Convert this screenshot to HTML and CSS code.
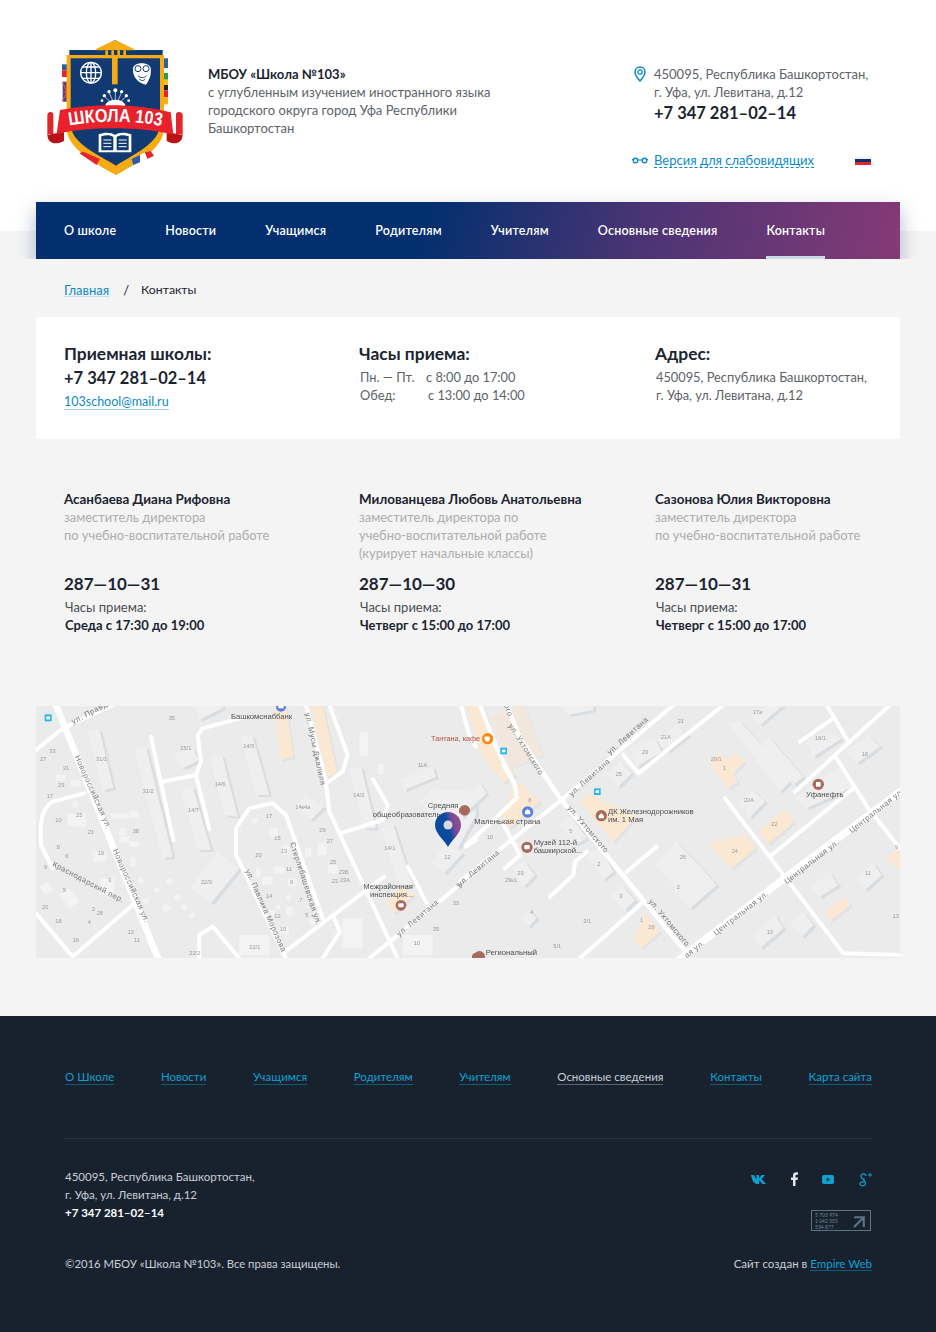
FILE: index.html
```html
<!DOCTYPE html>
<html lang="ru">
<head>
    <meta charset="UTF-8">
    <meta name="viewport" content="width=device-width, initial-scale=1.0">
    <title>Контакты — Школа 103</title>
    <link rel="stylesheet" href="styles.css">
</head>
<body>
    <!-- шапка -->
    <header class="header">
        <svg class="logo" viewBox="0 0 450 435" width="150" height="145">
            <!-- флаги по краям -->
            <rect x="66" y="68" width="26" height="20" fill="#fff" stroke="#e6e6e6"/>
            <rect x="66" y="88" width="26" height="18" fill="#2f5ca8"/>
            <rect x="66" y="106" width="26" height="20" fill="#e2262c"/>
            <rect x="68" y="140" width="24" height="60" fill="#3a4a86"/>
            <path d="M68 142l24 56M92 142l-24 56M80 140v60M68 170h24" stroke="#e2474c" stroke-width="4"/>
            <rect x="360" y="70" width="24" height="30" fill="#2f5ca8"/>
            <rect x="360" y="100" width="24" height="14" fill="#fff" stroke="#e6e6e6"/>
            <rect x="360" y="114" width="24" height="20" fill="#2f9a4a"/>
            <rect x="360" y="134" width="24" height="16" fill="#f6c21c"/>
            <rect x="360" y="150" width="24" height="16" fill="#1c2230"/>
            <rect x="360" y="166" width="24" height="20" fill="#e2262c"/>
            <rect x="360" y="186" width="24" height="22" fill="#f6b21c"/>
            <!-- щит -->
            <path d="M88 45H172L225 15L280 45H368V275C368 340 290 385 228 418C165 385 88 340 88 275Z" fill="#123a72"/>
            <path d="M225 15L282 42V46H168V42Z" fill="#f5ab13"/>
            <path d="M190 46h70v14h-70z" fill="#123a72"/>
            <path d="M196 46h8v14h-8zM214 46h8v14h-8zM232 46h8v14h-8zM250 46h8v14h-8z" fill="#f5ab13"/>
            <path d="M80 60H372V280C372 340 290 385 228 420C165 385 80 340 80 280ZM92 70V268C92 325 176 360 228 392C278 360 360 325 360 268V70Z" fill="#f5ab13" fill-rule="evenodd"/>
            <rect x="216" y="60" width="17" height="88" fill="#f5ab13"/>
            <!-- глобус -->
            <g fill="none" stroke="#fff" stroke-width="4">
                <circle cx="153" cy="113" r="31"/>
                <ellipse cx="153" cy="113" rx="14" ry="31"/>
                <path d="M153 82v62M122 113h62M127 96h52M127 130h52"/>
            </g>
            <!-- сова -->
            <path d="M279 100C282 80 328 80 332 100C335 122 326 138 318 149C298 146 276 128 279 100Z" fill="#fff"/>
            <g fill="none" stroke="#123a72" stroke-width="3">
                <circle cx="294" cy="101" r="9"/>
                <circle cx="318" cy="101" r="9"/>
                <path d="M294 122C302 130 312 130 320 122M298 132C304 138 310 138 316 132"/>
            </g>
            <!-- точки над лентой -->
            <g fill="#fff">
                <circle cx="226" cy="166" r="6"/><circle cx="207" cy="170" r="5"/><circle cx="245" cy="170" r="5"/>
                <circle cx="193" cy="182" r="5"/><circle cx="259" cy="182" r="5"/><circle cx="186" cy="197" r="4"/>
                <circle cx="266" cy="197" r="4"/>
            </g>
            <path d="M226 214L207 172M226 214L226 168M226 214L245 172M226 214L193 184M226 214L259 184" stroke="#fff" stroke-width="2"/>
            <path d="M196 214a30 20 0 0 1 60 0z" fill="#fff"/>
            <!-- лента -->
            <path d="M22 240C22 230 36 228 40 236V300C36 296 28 296 22 300Z" fill="#e2262c"/>
            <path d="M22 300C24 328 48 330 72 318L72 290L40 296Z" fill="#b81319"/>
            <path d="M428 240C428 230 412 228 408 236V300C412 296 422 296 428 300Z" fill="#e2262c"/>
            <path d="M428 300C426 328 402 330 380 318L380 290L408 296Z" fill="#b81319"/>
            <path d="M60 225C160 205 290 205 392 232L400 298C290 274 160 274 50 296Z" fill="#e9212b"/>
            <path id="logo-arc" d="M88 272C170 256 280 256 367 274" fill="none"/>
            <text class="logo-text"><textPath href="#logo-arc" textLength="278" lengthAdjust="spacingAndGlyphs">ШКОЛА 103</textPath></text>
            <!-- книга -->
            <path d="M176 298C195 290 215 292 225 300C235 292 255 290 274 298V352H176Z" fill="#fff"/>
            <path d="M184 304C198 299 212 300 220 306V346H184ZM266 304C252 299 238 300 230 306V346H266Z" fill="#123a72"/>
            <path d="M190 315h24M190 325h24M190 335h24M236 315h24M236 325h24M236 335h24" stroke="#fff" stroke-width="3"/>
            <!-- флаги снизу -->
            <path d="M118 355L130 350L180 372L170 390Z" fill="#e2262c"/>
            <path d="M275 372L300 360L300 382L280 390Z" fill="#2f5ca8"/>
            <path d="M300 360L315 352L322 372L300 382Z" fill="#fff"/>
            <path d="M315 352L332 348L342 362L322 372Z" fill="#e2262c"/>
        </svg>
        <div class="school-name">
            <b>МБОУ «Школа №103»</b><br>
            с углубленным изучением иностранного языка<br>
            городского округа город Уфа Республики<br>
            Башкортостан
        </div>
        <div class="header-right">
            <div class="address">
                <svg class="pin" viewBox="0 0 12 16" width="12" height="16">
                    <path d="M6 1C3 1 1 3.200 1 6c0 3.500 5 9 5 9s5-5.500 5-9C11 3.200 9 1 6 1z" fill="none" stroke="#0b8ac6" stroke-width="1.500"/>
                    <circle cx="6" cy="6" r="2.200" fill="none" stroke="#0b8ac6" stroke-width="1.300"/>
                </svg>
                <div>
                    450095, Республика Башкортостан,<br>
                    г. Уфа, ул. Левитана, д.12
                    <div class="big-phone">+7 347 281–02–14</div>
                </div>
            </div>
            <div class="tools">
                <svg viewBox="0 0 16 7" width="16" height="7">
                    <circle cx="3.500" cy="3.500" r="2.300" fill="none" stroke="#0b8ac6" stroke-width="1.400"/>
                    <circle cx="12.500" cy="3.500" r="2.300" fill="none" stroke="#0b8ac6" stroke-width="1.400"/>
                    <path d="M5.500 3h5M0 2.500h1.500M14.500 2.500h1.500" stroke="#0b8ac6" stroke-width="1.200"/>
                </svg>
                <a class="blind-link" href="#">Версия для слабовидящих</a>
                <span class="flag"><i></i><i></i><i></i></span>
            </div>
        </div>
    </header>

    <!-- меню -->
    <div class="nav-wrap">
        <nav class="nav">
            <a href="#">О школе</a>
            <a href="#">Новости</a>
            <a href="#">Учащимся</a>
            <a href="#">Родителям</a>
            <a href="#">Учителям</a>
            <a href="#">Основные сведения</a>
            <a href="#" class="active">Контакты</a>
            <svg class="search" viewBox="0 0 16 16" width="16" height="16">
                <circle cx="6.500" cy="6.500" r="4.700" fill="none" stroke="#fff" stroke-width="1.800"/>
                <path d="M10 10l5 5" stroke="#fff" stroke-width="2"/>
            </svg>
        </nav>
    </div>

    <main class="main">
        <div class="breadcrumbs">
            <a href="#">Главная</a>
            <span class="sep">/</span>
            <span class="current">Контакты</span>
        </div>

        <section class="card">
            <div>
                <h3>Приемная школы:</h3>
                <div class="card-phone">+7 347 281–02–14</div>
                <a class="mail" href="#">103school@mail.ru</a>
            </div>
            <div>
                <h3>Часы приема:</h3>
                <div class="hours"><span>Пн. — Пт.</span>с 8:00 до 17:00</div>
                <div class="hours"><span class="wide">Обед:</span>с 13:00 до 14:00</div>
            </div>
            <div>
                <h3>Адрес:</h3>
                <div class="hours">450095, Республика Башкортостан,</div>
                <div class="hours">г. Уфа, ул. Левитана, д.12</div>
            </div>
        </section>

        <section class="people">
            <div class="person">
                <div class="person-name">Асанбаева Диана Рифовна</div>
                <div class="person-post">заместитель директора<br>по учебно-воспитательной работе</div>
                <div class="person-phone">287—10—31</div>
                <div class="person-hours">Часы приема:</div>
                <div class="person-time">Среда с 17:30 до 19:00</div>
            </div>
            <div class="person">
                <div class="person-name">Милованцева Любовь Анатольевна</div>
                <div class="person-post">заместитель директора по<br>учебно-воспитательной работе<br>(курирует начальные классы)</div>
                <div class="person-phone">287—10—30</div>
                <div class="person-hours">Часы приема:</div>
                <div class="person-time">Четверг с 15:00 до 17:00</div>
            </div>
            <div class="person">
                <div class="person-name">Сазонова Юлия Викторовна</div>
                <div class="person-post">заместитель директора<br>по учебно-воспитательной работе</div>
                <div class="person-phone">287—10—31</div>
                <div class="person-hours">Часы приема:</div>
                <div class="person-time">Четверг с 15:00 до 17:00</div>
            </div>
        </section>

        <!-- карта -->
        <svg class="map" viewBox="0 0 864 252" width="864" height="252">
            <rect width="864" height="252" fill="#ebebeb"/>
            <!-- левая половина, координаты в масштабе 3:1 -->
            <g transform="scale(.3333) translate(0,-3)">
                <g class="map-build">
                    <path d="M155 80L190 72L232 250L200 255Z"/>
                    <path d="M295 130L330 125L410 455L380 460Z"/>
                    <path d="M435 255L470 245L525 435L485 435Z"/>
                    <path d="M520 155L558 150L605 335L565 330Z"/>
                    <path d="M612 95L648 90L700 270L660 270Z"/>
                    <path d="M940 190L975 185L1020 370L985 370Z"/>
                    <path d="M1035 370L1070 355L1130 540L1090 545Z"/>
                    <path d="M1090 225L1190 185L1200 215L1105 255Z"/>
                    <path d="M460 550L545 440L610 490L525 595Z"/>
                    <path d="M410 150L470 130L490 165L440 190Z"/>
                    <path d="M770 310L810 270L865 305L825 345Z"/>
                    <path d="M470 0H560V10L490 45Z"/>
                    <path d="M1150 290L1190 250L1320 260V330L1265 430Z"/>
                    <path d="M1185 470L1235 415L1280 445L1225 505Z"/>
                </g>
                <g class="map-orange">
                    <path d="M712 0H750L772 155L735 165Z"/>
                    <path d="M825 0H860L905 205L872 218Z"/>
                    <path d="M1050 590L1095 545L1135 570L1075 625Z"/>
                    <path d="M1290 0H1320V90Z"/>
                </g>
                <g fill="#f3f3f3">
                    <rect x="225" y="325" width="50" height="16"/><rect x="280" y="318" width="28" height="20"/>
                    <rect x="250" y="370" width="18" height="20"/><rect x="250" y="395" width="30" height="18"/>
                    <rect x="280" y="410" width="30" height="16"/><rect x="283" y="458" width="16" height="26"/>
                    <path d="M315 515l12 12-12 12-12-12z"/><path d="M400 517l12 12-12 12-12-12z"/>
                    <path d="M362 545l10 10-10 10-10-10z"/><path d="M424 565l12 10-12 12-12-10z"/>
                    <path d="M390 597l14 10-14 14-14-10z"/><path d="M445 595l12 10-12 12-12-10z"/>
                    <path d="M468 620l12 10-12 12-12-10z"/><path d="M330 577l12 10-12 12-12-10z"/>
                    <rect x="95" y="325" width="55" height="40"/><rect x="60" y="210" width="28" height="18"/>
                    <rect x="105" y="225" width="28" height="20"/><rect x="110" y="290" width="18" height="18"/>
                    <path d="M10 545l22-15 20 25-22 15z"/><path d="M70 570l30-20 30 40-30 20z"/>
                    <rect x="190" y="520" width="45" height="50"/><rect x="170" y="440" width="40" height="30"/>
                    <rect x="715" y="485" width="30" height="22"/><rect x="680" y="515" width="30" height="24"/>
                    <rect x="755" y="520" width="26" height="24"/><rect x="808" y="430" width="18" height="26"/>
                    <rect x="845" y="415" width="26" height="36"/><rect x="875" y="480" width="30" height="26"/>
                    <rect x="650" y="340" width="14" height="14"/><rect x="700" y="370" width="26" height="26"/>
                    <rect x="740" y="420" width="20" height="30"/><rect x="660" y="490" width="14" height="26"/>
                    <rect x="750" y="570" width="16" height="16"/><rect x="720" y="600" width="12" height="12"/>
                    <rect x="700" y="615" width="16" height="16"/><rect x="750" y="605" width="20" height="26"/>
                    <rect x="730" y="665" width="30" height="24"/><rect x="820" y="640" width="20" height="20"/>
                    <rect x="970" y="80" width="26" height="74"/><rect x="1025" y="178" width="18" height="30"/>
                    <rect x="610" y="690" width="90" height="60"/><rect x="920" y="640" width="60" height="90"/>
                    <rect x="1100" y="690" width="90" height="60"/>
                </g>
                <g fill="none" stroke="#fff" stroke-linecap="round" stroke-linejoin="round" stroke-width="12">
                    <path d="M60 0L370 770" stroke-width="20"/>
                    <path d="M0 135L80 70L230 0"/>
                    <path d="M145 265L50 290C20 310 10 340 15 420L50 490"/>
                    <path d="M0 625L110 755L290 600"/>
                    <path d="M345 95L412 405"/>
                    <path d="M380 230L480 210L520 372"/>
                    <path d="M480 210L495 170L485 90L500 70L620 38"/>
                    <path d="M810 0L870 230L880 320L1085 760"/>
                    <path d="M880 0L935 150L920 200L870 235"/>
                    <path d="M912 385L1040 345L1055 300L1010 222"/>
                    <path d="M750 760L600 450V370L640 310L710 295L750 330L860 640"/>
                    <path d="M740 745L1045 515"/>
                    <path d="M890 630L912 680L860 760"/>
                    <path d="M490 760V690L530 665L610 760"/>
                    <path d="M1000 760L1320 500"/>
                    <path d="M1115 485L1180 610"/>
                    <path d="M1290 425L1320 405"/>
                    <path d="M1275 0L1300 90L1320 125"/>
                </g>
                <g class="map-num">
                    <text x="398" y="44">35</text><text x="433" y="136">25/1</text><text x="180" y="168">31/1</text>
                    <text x="320" y="265">31/2</text><text x="622" y="128">14/5</text><text x="536" y="242">14/6</text>
                    <text x="456" y="322">14/7</text><text x="952" y="275">14/2</text><text x="778" y="313">14к4а</text>
                    <text x="1045" y="434">14/1</text><text x="1145" y="185">11А</text><text x="690" y="340">17</text>
                    <text x="850" y="380">29</text><text x="872" y="414">27</text><text x="715" y="404">15</text>
                    <text x="735" y="445">13</text><text x="658" y="456">20</text><text x="882" y="478">25</text>
                    <text x="750" y="499">11</text><text x="762" y="537">9</text><text x="908" y="508">23Б</text>
                    <text x="887" y="534">23</text><text x="912" y="532">23А</text><text x="690" y="580">14</text>
                    <text x="790" y="592">7</text><text x="715" y="639">12</text><text x="808" y="635">5</text>
                    <text x="732" y="677">10</text><text x="495" y="536">22/3</text><text x="640" y="731">22/1</text>
                    <text x="460" y="751">22/2</text><text x="290" y="384">38</text><text x="155" y="387">21</text>
                    <text x="185" y="449">19</text><text x="120" y="335">25</text><text x="58" y="350">10</text>
                    <text x="62" y="432">8</text><text x="88" y="460">6</text><text x="24" y="492">9</text>
                    <text x="216" y="530">3</text><text x="80" y="560">5</text><text x="18" y="613">20</text>
                    <text x="58" y="653">18</text><text x="155" y="658">4</text><text x="168" y="618">2</text>
                    <text x="182" y="631">26</text><text x="110" y="710">16</text><text x="275" y="686">13</text>
                    <text x="294" y="710">11</text><text x="40" y="144">33</text><text x="12" y="168">27</text>
                    <text x="80" y="195">31</text><text x="66" y="245">29</text><text x="32" y="279">17</text>
                    <text x="1225" y="463">12</text><text x="1250" y="600">33</text><text x="1190" y="679">35</text>
                    <text x="1133" y="720">10</text>
                </g>
                <g class="map-street">
                    <text transform="translate(112,58) rotate(-28)">ул. Правды</text>
                    <text transform="translate(116,155) rotate(66)">Новороссийская ул.</text>
                    <text transform="translate(230,436) rotate(66)">Новороссийская ул.</text>
                    <text transform="translate(48,482) rotate(28)">Краснодарский пер.</text>
                    <text transform="translate(808,25) rotate(78)">ул. Мусы Джалиля</text>
                    <text transform="translate(628,497) rotate(66)">ул. Павлика Морозова</text>
                    <text transform="translate(762,415) rotate(72)">Стерлибашевская ул.</text>
                    <text transform="translate(1090,695) rotate(-40)">ул. Левитана</text>
                    <text transform="translate(1268,548) rotate(-40)">ул. Ле</text>
                </g>
                <g class="map-label">
                    <text x="585" y="42">Башкомснаббанк</text>
                    <text x="1175" y="309">Средняя</text>
                    <text x="1010" y="335">общеобразователь</text>
                    <text x="982" y="551">Межрайонная</text>
                    <text x="1002" y="577">инспекция...</text>
                </g>
                <rect x="26" y="28" width="21" height="21" fill="#29b6e8"/>
                <rect x="31" y="34" width="11" height="9" fill="#fff"/>
                <circle cx="735" cy="5" r="15" fill="#5a80e0"/>
                <rect x="727" y="0" width="16" height="10" fill="#fff"/>
                <circle cx="1285" cy="317" r="16" fill="#a96a5e"/>
                <path d="M1275 314l10-5 10 5-10 5zM1279 320h12v4h-12z" fill="#fff"/>
                <circle cx="1095" cy="601" r="16" fill="#a96a5e"/>
                <rect x="1087" y="595" width="16" height="12" rx="3" fill="#fff"/>
                <circle cx="1320" cy="756" r="12" fill="#a96a5e"/>
            </g>
            <!-- правая половина -->
            <g transform="translate(424,-1) scale(.3333)">
                <g class="map-build">
                    <path d="M440 205L480 170L515 205L475 245Z"/>
                    <path d="M510 130L585 100L605 140L530 185Z"/>
                    <path d="M590 105L650 60L685 90L620 140Z"/>
                    <path d="M800 50L840 50L1000 220L960 260L900 180Z"/>
                    <path d="M900 110L930 100L1030 215L1000 240Z"/>
                    <path d="M835 295L880 255L915 290L870 335Z"/>
                    <path d="M1040 110L1090 80L1145 100L1060 155Z"/>
                    <path d="M1160 140L1225 90L1260 125L1190 175Z"/>
                    <path d="M1005 280L1140 185L1180 245L1040 310Z"/>
                    <path d="M585 480L650 410L725 490L770 540L690 610L650 570L640 540Z"/>
                    <path d="M0 290L60 235L80 265L0 340Z"/>
                    <path d="M295 355L335 335L380 400L345 420Z"/>
                    <path d="M385 450L420 430L460 500L430 525Z"/>
                    <path d="M160 490L195 470L225 510L190 545Z"/>
                    <path d="M450 570L485 540L525 585L495 615Z"/>
                    <path d="M180 640L210 615L230 640L205 665Z"/>
                    <path d="M880 690L945 630L970 670L900 730Z"/>
                    <path d="M1190 520L1240 475L1265 510L1215 555Z"/>
                    <path d="M1050 545L1110 505L1135 540L1080 575Z"/>
                    <path d="M990 655L1030 620L1060 660L1025 695Z"/>
                    <path d="M300 0H400V15L325 30Z"/>
                    <path d="M870 30L930 0H970L900 60Z"/>
                </g>
                <g class="map-orange">
                    <path d="M90 30L190 0L250 150L150 190Z" opacity=".6"/>
                    <path d="M20 0H70L110 130L165 210L130 235L60 140Z"/>
                    <path d="M165 235L185 235L240 290L150 370L125 335Z"/>
                    <path d="M385 265L530 335L460 410L360 290Z"/>
                    <path d="M750 175L775 145L800 165L825 145L855 170L820 205L835 230L805 250Z"/>
                    <path d="M895 380L975 312L1003 350L925 418Z"/>
                    <path d="M748 420L770 400L795 410L815 395L855 390L888 430L815 490Z"/>
                    <path d="M520 705L555 625L600 680L545 728Z"/>
                    <path d="M1095 620L1155 575L1172 600L1115 645Z"/>
                    <path d="M1280 460L1320 425V500Z"/>
                </g>
                <g fill="none" stroke="#fff" stroke-linecap="round" stroke-linejoin="round" stroke-width="12">
                    <path d="M60 0L110 130L165 240L170 280L20 420"/>
                    <path d="M140 0L180 100L300 280L680 745" stroke-width="14"/>
                    <path d="M130 180L165 240"/>
                    <path d="M0 530L310 280L640 0"/>
                    <path d="M135 490L180 450L125 350"/>
                    <path d="M270 575L340 510L345 470L380 440"/>
                    <path d="M500 500L590 425"/>
                    <path d="M490 150L535 205L790 0"/>
                    <path d="M795 280L1150 745L1320 750"/>
                    <path d="M935 450L1180 250"/>
                    <path d="M1005 260L1290 0"/>
                    <path d="M1020 110L1120 40"/>
                    <path d="M1100 0L1165 110"/>
                    <path d="M1130 160L1225 310L1320 430"/>
                    <path d="M650 770L960 530L1320 260" stroke-width="22"/>
                    <path d="M360 760L550 590"/>
                </g>
                <g class="map-num">
                    <text x="653" y="54">21</text><text x="602" y="102">21А</text><text x="546" y="148">23</text>
                    <text x="467" y="212">25</text><text x="752" y="167">20/1</text><text x="788" y="196">1</text>
                    <text x="878" y="26">17а</text><text x="1065" y="106">18/1</text><text x="1205" y="152">18</text>
                    <text x="852" y="291">22А</text><text x="934" y="362">22</text><text x="815" y="443">24</text>
                    <text x="205" y="291">8</text><text x="80" y="403">10</text><text x="327" y="385">5</text>
                    <text x="412" y="484">2</text><text x="172" y="509">29</text><text x="135" y="530">29к1</text>
                    <text x="660" y="462">26</text><text x="650" y="553">2</text><text x="478" y="578">3</text>
                    <text x="210" y="628">4</text><text x="370" y="654">3/1</text><text x="280" y="730">5/1</text>
                    <text x="540" y="650">1</text><text x="565" y="673">28</text><text x="920" y="688">13</text>
                    <text x="1215" y="509">11</text><text x="1305" y="432">9</text><text x="1298" y="640">13</text>
                </g>
                <g class="map-street">
                    <text transform="translate(132,0) rotate(70)">ого</text>
                    <text transform="translate(145,62) rotate(58)">ул. Ухтомского</text>
                    <text transform="translate(322,310) rotate(50)">ул. Ухтомского</text>
                    <text transform="translate(565,590) rotate(50)">ул. Ухтомского</text>
                    <text transform="translate(335,275) rotate(-42)">ул. Левитана</text>
                    <text transform="translate(450,150) rotate(-42)">ул. Левитана</text>
                    <text transform="translate(0,545) rotate(-40)">ул. Левитана</text>
                    <text transform="translate(768,692) rotate(-38)">Центральная ул.</text>
                    <text transform="translate(980,538) rotate(-38)">Центральная ул.</text>
                    <text transform="translate(1175,385) rotate(-38)">Центральная ул.</text>
                    <text transform="translate(680,760) rotate(-38)">ая ул.</text>
                </g>
                <g class="map-label">
                    <text x="43" y="358">Маленькая страна</text>
                    <text x="444" y="326">ДК Железнодорожников</text>
                    <text x="444" y="351">им. 1 Мая</text>
                    <text x="221" y="420">Музей 112-й</text>
                    <text x="221" y="445">башкирской...</text>
                    <text x="1038" y="275">Уфанефть</text>
                    <text x="77" y="749">Региональный</text>
                </g>
                <circle cx="83" cy="101" r="17" fill="#f58a10"/>
                <path d="M74 95h15v6a7 7 0 0 1-15 0zM76 110h12" fill="#fff" stroke="#fff" stroke-width="1"/>
                <rect x="121" y="128" width="20" height="20" fill="#29b6e8"/>
                <rect x="126" y="134" width="10" height="8" fill="#fff"/>
                <rect x="402" y="250" width="20" height="20" fill="#29b6e8"/>
                <rect x="407" y="256" width="10" height="8" fill="#fff"/>
                <circle cx="203" cy="321" r="17" fill="#5a80e0"/>
                <path d="M195 328v-9l8-7 8 7v9z" fill="#fff"/>
                <circle cx="14" cy="316" r="16" fill="#a96a5e"/>
                <circle cx="424" cy="332" r="17" fill="#a96a5e"/>
                <path d="M416 340v-8l8-8 8 8v8z" fill="#fff"/>
                <circle cx="201" cy="427" r="17" fill="#a96a5e"/>
                <rect x="193" y="420" width="16" height="13" rx="3" fill="#fff"/>
                <circle cx="1075" cy="238" r="17" fill="#a96a5e"/>
                <rect x="1068" y="231" width="14" height="14" fill="#fff"/>
                <circle cx="58" cy="755" r="17" fill="#a96a5e"/>
            </g>
            <text class="map-cafe" x="395" y="34.500">Тантана, кафе</text>
            <!-- метка -->
            <defs>
                <linearGradient id="pin-grad" x1="0" y1=".6" x2="1" y2=".2">
                    <stop offset=".5" stop-color="#0b4a9e"/>
                    <stop offset=".7" stop-color="#7a4a98"/>
                    <stop offset="1" stop-color="#94508e"/>
                </linearGradient>
            </defs>
            <path d="M412 106A13 13 0 0 1 425 119C425 128 416 133 412 141C408 133 399 128 399 119A13 13 0 0 1 412 106Z" fill="url(#pin-grad)"/>
            <circle cx="412" cy="119" r="4.500" fill="#d8dce0"/>
        </svg>
    </main>

    <!-- подвал -->
    <footer class="footer">
        <div class="footer-menu">
            <a href="#">О Школе</a>
            <a href="#">Новости</a>
            <a href="#">Учащимся</a>
            <a href="#">Родителям</a>
            <a href="#">Учителям</a>
            <a href="#" class="active">Основные сведения</a>
            <a href="#">Контакты</a>
            <a href="#">Карта сайта</a>
        </div>
        <div class="footer-mid">
            <div>
                450095, Республика Башкортостан,<br>
                г. Уфа, ул. Левитана, д.12<br>
                <b>+7 347 281–02–14</b>
            </div>
            <div class="footer-side">
                <div class="social">
                    <svg viewBox="0 0 15 9" width="15" height="9"><path d="M0 0h3l2.500 4.500V0H8v3.500L10.500 0H14l-3.500 4L15 9h-3.500L8 5v4H6C3 9 1 5 0 0z" fill="#0fa0d0"/></svg>
                    <svg viewBox="0 0 7 14" width="7" height="14"><path d="M2 14V8H0V5.500h2V3.500C2 1 3.500 0 7 .3v2.500C5 2.700 4.500 3 4.500 4v1.500H7L6.600 8H4.500v6z" fill="#dfe6ec"/></svg>
                    <svg viewBox="0 0 12 9" width="12" height="9"><rect width="12" height="9" rx="2" fill="#0fa0d0"/><path d="M4.800 2.500v4l3.200-2z" fill="#18222f"/></svg>
                    <svg viewBox="0 0 13 15" width="13" height="15">
                        <path d="M7 4C7 1.500 3 1 2 3.500C1.500 5.500 3 7.500 5.500 6.500M4.500 7.500C5 9 7.500 10 6.200 12.500C4.800 14.500 .8 14 .8 12C1 10 3.500 9.500 5.200 10" fill="none" stroke="#0fa0d0" stroke-width="1.200"/>
                        <path d="M9 3h4M11 1v4" stroke="#0fa0d0" stroke-width="1"/>
                    </svg>
                </div>
                <div class="stamp">
                    <span>5 705 974<br>1 042 555<br>534 877</span>
                    <svg viewBox="0 0 13 13" width="14" height="14"><path d="M1 3h9v9M10 3L1 12" fill="none" stroke="#5d7382" stroke-width="2"/></svg>
                </div>
            </div>
        </div>
        <div class="footer-bottom">
            <span class="copyright">©2016 МБОУ «Школа №103». Все права защищены.</span>
            <span>Сайт создан в <a href="#">Empire Web</a></span>
        </div>
    </footer>
</body>
</html>
```

FILE: styles.css
```css
* {
    box-sizing: border-box;
}
body {
    margin: 0;
    font-family: Lato, "Noto Sans", Arial, sans-serif;
    font-size: 13px;
    line-height: 18px;
    color: #1b2430;
    background: #fff;
}
a {
    color: inherit;
    text-decoration: none;
}

/* шапка */
.header {
    height: 202px;
    padding: 35px 36px 0 40px;
    display: flex;
    align-items: flex-start;
}
.logo {
    flex: none;
}
.school-name {
    margin: 30px 0 0 18px;
    width: 300px;
    color: #5d6268;
}
.school-name b {
    color: #1b2430;
}
.header-right {
    margin: 30px 0 0 auto;
    width: 266px;
    color: #5d6268;
}
.address {
    display: flex;
    gap: 8px;
}
.pin {
    flex: none;
    margin-top: 1px;
}
.big-phone {
    margin-top: 2px;
    font-size: 16.500px;
    line-height: 20px;
    font-weight: 700;
    color: #1b2430;
}
.tools {
    margin: 30px 0 0 -2px;
    display: flex;
    align-items: center;
    gap: 6px;
}
.blind-link {
    color: #0b8ac6;
    border-bottom: 1px dashed #0b8ac6;
    line-height: 14px;
}
.flag {
    margin-left: 35px;
    width: 16px;
}
.flag i {
    display: block;
    height: 3px;
    background: #0e2f6b;
}
.flag i:first-child {
    background: #f3f3f3;
}
.flag i:last-child {
    background: #e2262c;
}

/* меню */
.nav-wrap {
    padding: 0 36px;
    background: linear-gradient(#fff 29px, #f4f4f4 29px);
}
.nav {
    height: 57px;
    padding: 0 26px 0 28px;
    display: flex;
    align-items: stretch;
    gap: 49px;
    white-space: nowrap;
    font-size: 12.500px;
    letter-spacing: .2px;
    font-weight: 600;
    color: #fff;
    background: linear-gradient(105deg, #032f6e 0%, #032f6e 45%, #4b3474 70%, #853a76 100%);
    box-shadow: 0 8px 18px rgba(20, 60, 110, .35);
}
.nav a {
    display: flex;
    align-items: center;
    border-bottom: 3px solid transparent;
    padding-top: 3px;
}
.nav a.active {
    border-bottom-color: #ccd8e8;
}
.search {
    margin: 20px 0 0 auto;
}

/* основная часть */
.main {
    padding: 0 36px 58px;
    background: #f4f4f4;
}
.breadcrumbs {
    height: 58px;
    padding: 22px 0 0 28px;
    display: flex;
    gap: 14px;
}
.breadcrumbs a {
    color: #0b8ac6;
    border-bottom: 1px solid #c4e0ef;
    height: 16px;
    line-height: 18px;
}
.current {
    margin-left: -2px;
    font-size: 12.300px;
}
.card {
    height: 122px;
    padding: 26px 28px 0;
    display: grid;
    grid-template-columns: 295px 296px 1fr;
    background: #fff;
}
.card h3 {
    margin: 0 0 3px;
    font-size: 17.400px;
    line-height: 22px;
    font-weight: 700;
}
.card-phone {
    margin: -2px 0 2px;
    font-size: 16.500px;
    line-height: 24px;
    font-weight: 700;
}
.mail {
    color: #0b8ac6;
    border-bottom: 1px solid #9bcde6;
    font-size: 12.500px;
}
.hours {
    padding-left: 1px;
    font-size: 12.800px;
    color: #5d6268;
}
.hours span {
    display: inline-block;
    width: 66px;
}
.hours span.wide {
    width: 68px;
}
.people {
    height: 267px;
    padding: 51px 28px 0;
    display: grid;
    grid-template-columns: 295px 296px 1fr;
}
.person {
    display: flex;
    flex-direction: column;
}
.person-name {
    font-size: 13.400px;
    font-weight: 700;
}
.person-post {
    height: 54px;
    margin-bottom: 10px;
    font-size: 12.900px;
    color: #adadad;
}
.person-phone {
    font-size: 17px;
    line-height: 24px;
    font-weight: 700;
}
.person-hours {
    margin-top: 2px;
    padding-left: 1px;
    color: #4a4f55;
}
.person-time {
    padding-left: 1px;
    font-weight: 700;
}

/* карта */
.map {
    display: block;
    filter: blur(.3px);
}
.map text {
    font-family: "Liberation Sans", Arial, sans-serif;
}
.map-build {
    fill: #efefef;
    filter: drop-shadow(9px 6px 0 #d8dde2);
}
.map-orange {
    fill: #fbe8d3;
    filter: drop-shadow(6px 6px 0 #e0e2e4);
}
.map-num {
    font-size: 17px;
    fill: #9a9a9a;
}
.map-street {
    font-size: 23px;
    letter-spacing: 1.500px;
    fill: #777;
}
.map-label {
    font-size: 23px;
    fill: #4e4e4e;
}
.map-cafe {
    font-size: 7.300px;
    fill: #b5533c;
}
.logo-text {
    font-family: "Liberation Sans", Arial, sans-serif;
    font-size: 56px;
    font-weight: 700;
    fill: #fff;
}

/* подвал */
.footer {
    height: 316px;
    padding: 54px 64px 0 65px;
    font-size: 11.500px;
    color: #c9ced4;
    background: #18222f;
}
.footer-menu {
    height: 69px;
    display: flex;
    justify-content: space-between;
    align-items: flex-start;
    border-bottom: 1px solid #2b3542;
    margin-left: -1px;
    padding-left: 1px;
}
.footer-menu a {
    color: #0fa0d0;
    border-bottom: 1px solid #135a78;
    line-height: 14px;
}
.footer-menu a.active {
    color: #c9ced4;
    border-bottom-color: #5d6670;
}
.footer-mid {
    height: 116px;
    padding-top: 29px;
    display: flex;
    justify-content: space-between;
}
.footer-mid b {
    color: #fff;
}
.footer-side {
    width: 121px;
}
.social {
    height: 16px;
    display: flex;
    align-items: center;
    justify-content: space-between;
    margin-top: 3px;
}
.stamp {
    margin: 23px 1px 0 auto;
    width: 60px;
    height: 21px;
    padding: 2px 3px;
    display: flex;
    align-items: center;
    justify-content: space-between;
    font-size: 5px;
    line-height: 6px;
    color: #6f8696;
    border: 1px solid #5d7382;
}
.footer-bottom {
    display: flex;
    justify-content: space-between;
}
.copyright {
    font-size: 11.300px;
}
.footer-bottom a {
    color: #0fa0d0;
    border-bottom: 1px solid #135a78;
}
```
